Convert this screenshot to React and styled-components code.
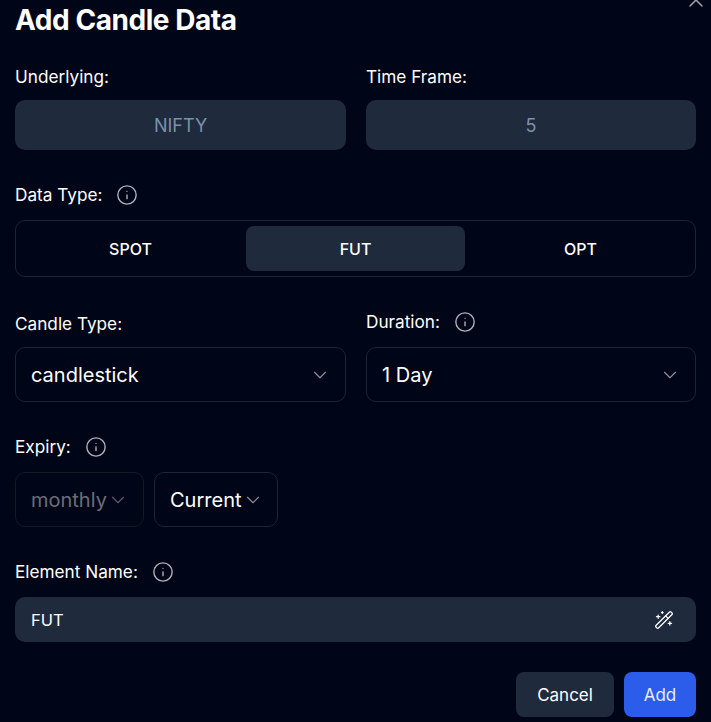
import React from 'react';
import styled, { createGlobalStyle } from 'styled-components';
import { ChevronDown, Info, WandSparkles, X } from 'lucide-react';

const GlobalStyle = createGlobalStyle`
  html, body {
    margin: 0;
    padding: 0;
    background: #000517;
    overflow: hidden;
  }
  * {
    box-sizing: border-box;
  }
`;

const App = () => (
  <>
    <GlobalStyle />
    <Modal>
      <CloseButton><X size={24} strokeWidth={1.5} /></CloseButton>
      <Title>Add Candle Data</Title>

      <TwoCols $mt={24}>
        <Field>
          <Label>Underlying:</Label>
          <ReadOnly>NIFTY</ReadOnly>
        </Field>
        <Field>
          <Label>Time Frame:</Label>
          <ReadOnly>5</ReadOnly>
        </Field>
      </TwoCols>

      <Field $mt={30}>
        <Label $withIcon>
          Data Type:
          <InfoIcon size={22} strokeWidth={1.5} />
        </Label>
        <Segments>
          <Segment>SPOT</Segment>
          <Segment $active>FUT</Segment>
          <Segment>OPT</Segment>
        </Segments>
      </Field>

      <TwoCols $mt={30}>
        <Field>
          <Label>Candle Type:</Label>
          <Select>
            candlestick
            <ChevronDown size={22} color="#8b8f9a" strokeWidth={1.25} />
          </Select>
        </Field>
        <Field>
          <Label $withIcon>
            Duration:
            <InfoIcon size={22} strokeWidth={1.5} />
          </Label>
          <Select>
            1 Day
            <ChevronDown size={22} color="#8b8f9a" strokeWidth={1.25} />
          </Select>
        </Field>
      </TwoCols>

      <Field $mt={30}>
        <Label $withIcon>
          Expiry:
          <InfoIcon size={22} strokeWidth={1.5} />
        </Label>
        <ExpiryRow>
          <SmallSelect $disabled $w={129}>
            monthly
            <ChevronDown size={22} color="#5b5e68" strokeWidth={1.25} />
          </SmallSelect>
          <SmallSelect $w={124}>
            Current
            <ChevronDown size={22} color="#8b8f9a" strokeWidth={1.25} />
          </SmallSelect>
        </ExpiryRow>
      </Field>

      <Field $mt={30}>
        <Label $withIcon>
          Element Name:
          <InfoIcon size={22} strokeWidth={1.5} />
        </Label>
        <NameInput>
          FUT
          <WandSparkles size={20} color="#ffffff" strokeWidth={1.5} />
        </NameInput>
      </Field>

      <Footer>
        <CancelButton>Cancel</CancelButton>
        <AddButton>Add</AddButton>
      </Footer>
    </Modal>
  </>
);

// Styled Components
const Modal = styled.div`
  position: relative;
  width: 711px;
  height: 722px;
  padding: 0 15px;
  background: #000517;
  color: #ffffff;
  font-family: Inter, "Liberation Sans", sans-serif;
  overflow: hidden;
`;

const CloseButton = styled.div`
  position: absolute;
  top: -12px;
  right: 3px;
  color: #a0a4ad;
`;

const Title = styled.h2`
  margin: 0;
  height: 40px;
  font-size: 28px;
  line-height: 40px;
  font-weight: 650;
  letter-spacing: -0.45px;
`;

const TwoCols = styled.div`
  display: grid;
  grid-template-columns: 331px 330px;
  align-items: end;
  gap: 20px;
  margin-top: ${props => props.$mt}px;
`;

const Field = styled.div`
  display: flex;
  flex-direction: column;
  margin-top: ${props => props.$mt || 0}px;
`;

const Label = styled.div`
  display: flex;
  align-items: center;
  gap: 14px;
  height: ${props => (props.$withIcon ? 28 : 24)}px;
  margin-bottom: 12px;
  padding-top: 2px;
  font-size: 17.2px;
  line-height: 20px;
  font-weight: 400;
`;

const InfoIcon = styled(Info)`
  color: #b0b3ba;
  flex: none;
`;

const ReadOnly = styled.div`
  display: flex;
  align-items: center;
  justify-content: center;
  height: 50px;
  border-radius: 10px;
  background: #1f2a3c;
  color: #7c90ab;
  font-size: 18px;
`;

const Segments = styled.div`
  display: grid;
  grid-template-columns: repeat(3, 1fr);
  gap: 6px;
  height: 57px;
  padding: 5px;
  border: 1px solid #1f2433;
  border-radius: 10px;
`;

const Segment = styled.div`
  display: flex;
  align-items: center;
  justify-content: center;
  border-radius: 8px;
  background: ${props => (props.$active ? '#1f2a3c' : 'transparent')};
  font-size: 16px;
  font-weight: 500;
`;

const Select = styled.div`
  display: flex;
  align-items: center;
  justify-content: space-between;
  height: 55px;
  padding: 0 14px 0 15px;
  border: 1px solid #1f2433;
  border-radius: 10px;
  font-size: 20px;
`;

const ExpiryRow = styled.div`
  display: flex;
  gap: 10px;
`;

const SmallSelect = styled.div`
  display: flex;
  align-items: center;
  width: ${props => props.$w}px;
  height: 55px;
  padding-left: 15px;
  border: 1px solid ${props => (props.$disabled ? '#141926' : '#1f2433')};
  border-radius: 10px;
  font-size: 20px;
  color: ${props => (props.$disabled ? '#6b6e77' : '#ffffff')};
`;

const NameInput = styled.div`
  display: flex;
  align-items: center;
  justify-content: space-between;
  height: 45px;
  padding: 0 22px 0 16px;
  border-radius: 10px;
  background: #1f2a3c;
  font-size: 16.5px;
  font-weight: 400;
`;

const Footer = styled.div`
  display: flex;
  justify-content: flex-end;
  gap: 10px;
  margin-top: 30px;
`;

const CancelButton = styled.button`
  width: 98px;
  height: 45px;
  border: none;
  border-radius: 8px;
  background: #1f2a3c;
  color: #ffffff;
  font-family: inherit;
  font-size: 17px;
  font-weight: 400;
`;

const AddButton = styled(CancelButton)`
  width: 72px;
  background: #2b5dea;
  color: #e8ecfb;
`;

export default App;
